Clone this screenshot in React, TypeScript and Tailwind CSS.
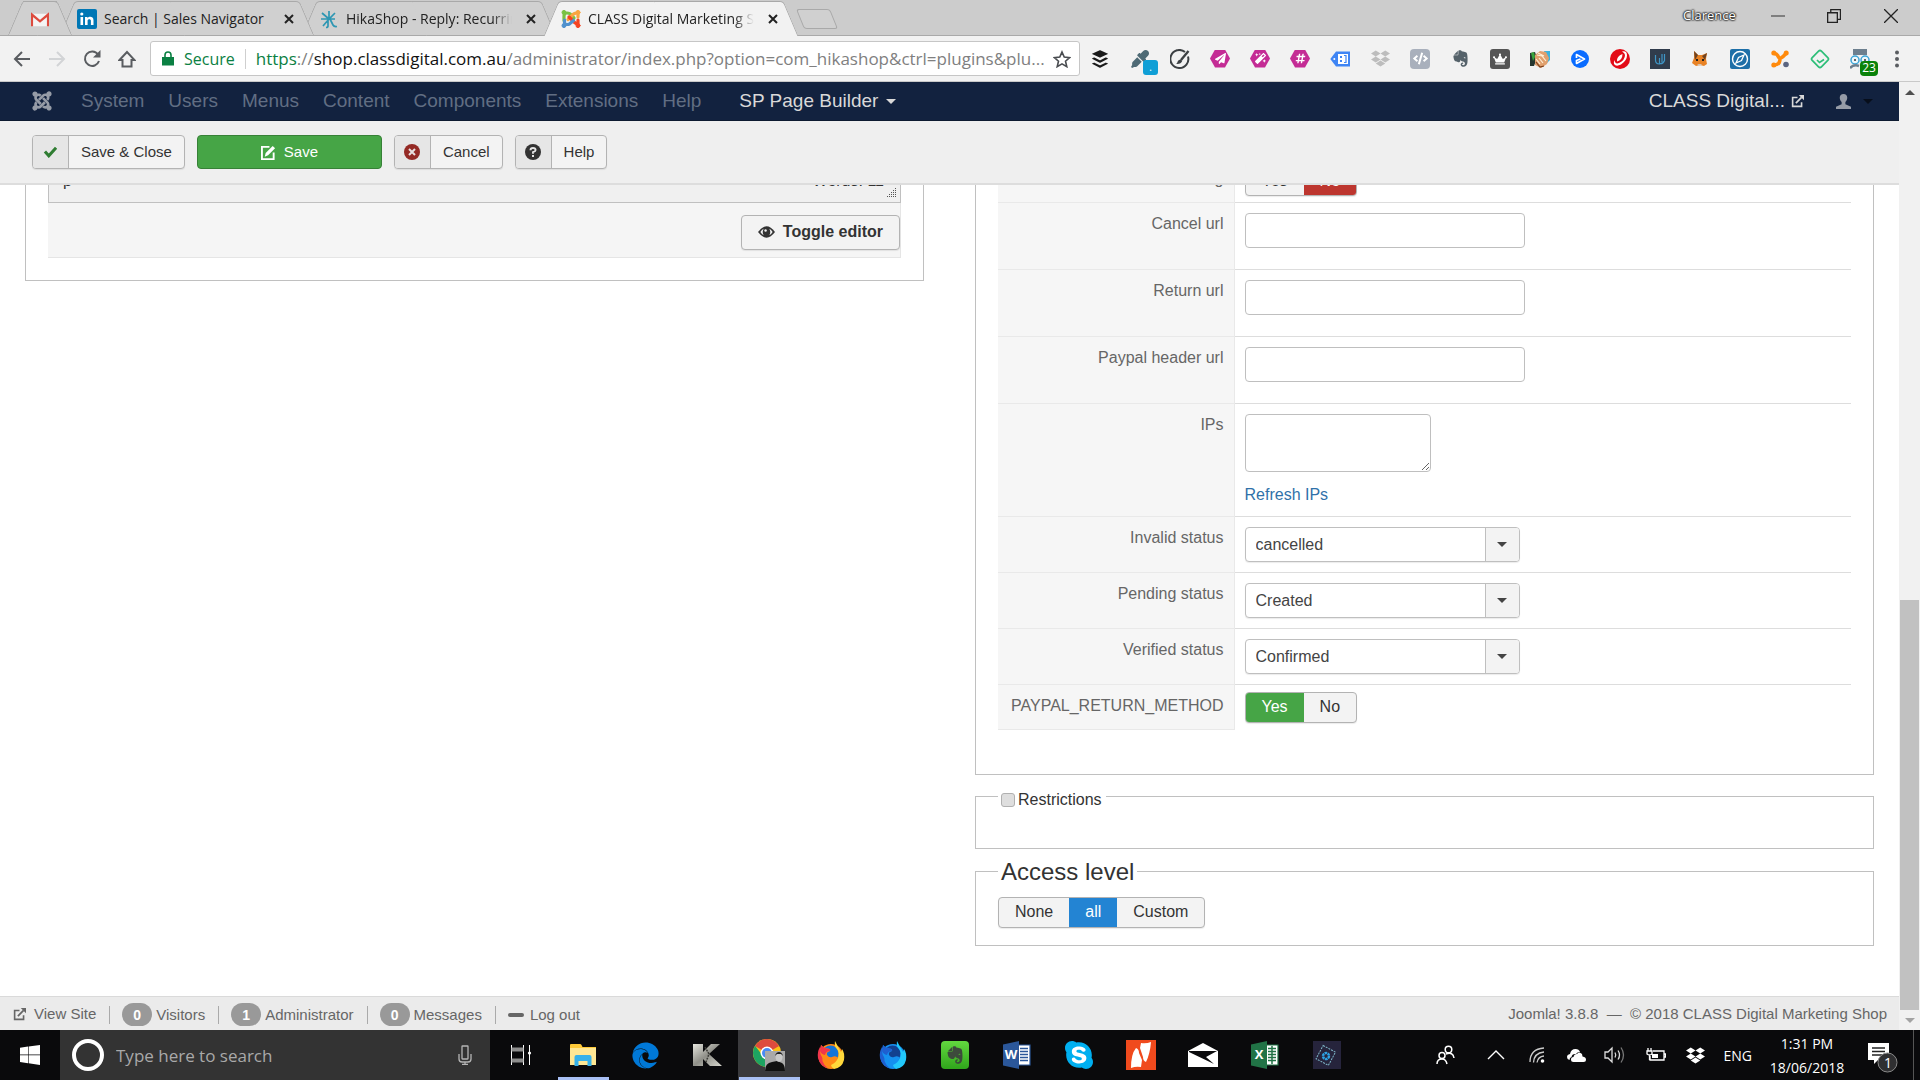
import type { ReactNode } from "react";
import {
  FaBuffer,
  FaCode,
  FaCrown,
  FaDropbox,
  FaEdge,
  FaEvernote,
  FaEyeDropper,
  FaHashtag,
  FaJoomla,
  FaMagic,
  FaPaperPlane,
  FaSkype
} from "react-icons/fa";

/* ---------- shared icons ---------- */

function ExternalIcon({ className }: { className: string }) {
  return (
    <svg viewBox="0 0 16 16" className={className} fill="none" stroke="currentColor" strokeWidth="2">
      <path d="M8 3H2v11h11V9" />
      <path d="M6 10l7-7" strokeWidth="2.2" />
      <path d="M9.5 0H16v6.5z" fill="currentColor" stroke="none" />
    </svg>
  );
}

function JoomlaColor({ className }: { className: string }) {
  return (
    <svg viewBox="0 0 20 20" className={className} fill="none" strokeWidth="3.2" strokeLinecap="round">
      <path d="M3 11.5V7q0-3 3-3t4 2l3 3" stroke="#7ac143" />
      <path d="M7 10.500l5-5q2-2 5-1V8" stroke="#f9a541" />
      <path d="M8 8l5 5q2 2 4 2v-4" stroke="#f44321" />
      <path d="M12.500 11.500L8.500 15q-2 1-5 0v-4" stroke="#5091cd" />
      <circle cx="3" cy="3.4" r="2" fill="#7ac143" stroke="#7ac143" strokeWidth="1" />
      <circle cx="17" cy="3.4" r="2" fill="#f9a541" stroke="#f9a541" strokeWidth="1" />
      <circle cx="17" cy="16.600" r="2" fill="#f44321" stroke="#f44321" strokeWidth="1" />
      <circle cx="3" cy="16.600" r="2" fill="#5091cd" stroke="#5091cd" strokeWidth="1" />
    </svg>
  );
}

function Caret({ className = "" }: { className?: string }) {
  return (
    <svg viewBox="0 0 10 5" className={`h-[5px] w-2.5 ${className}`} fill="currentColor">
      <path d="M0 0h10L5 5z" />
    </svg>
  );
}

/* ---------- browser chrome ---------- */

type Tab = { title: string; icon: ReactNode; active?: boolean; layer: string };

const tabs: Tab[] = [
  {
    title: "Search | Sales Navigator",
    layer: "z-20",
    icon: (
      <svg viewBox="0 0 20 20" className="h-5 w-5 shrink-0">
        <rect width="20" height="20" rx="2" fill="#0077b5" />
        <path d="M3.5 8h2.6v8H3.5zM8 8h2.5v1.2c1.600-2.200 6-1.800 6 2V16h-2.600v-4.300c0-2-3.300-2-3.300 0V16H8z" fill="#fff" />
        <circle cx="4.800" cy="5" r="1.600" fill="#fff" />
      </svg>
    )
  },
  {
    title: "HikaShop - Reply: Recurring",
    layer: "z-10",
    icon: (
      <svg viewBox="0 0 20 20" className="h-5 w-5 shrink-0" fill="none" stroke="#2f97b3" strokeWidth="1.700">
        <path d="M10 2v8M3 4l7 6 6-6M2 10h14M10 10l-6 7M9 10v7q0 1.500-2 1.500M11 10l3 6q1 2 4 1.500" />
      </svg>
    )
  },
  {
    title: "CLASS Digital Marketing Shop",
    layer: "z-30",
    active: true,
    icon: <JoomlaColor className="h-5 w-5 shrink-0" />
  }
];

function TabShape({ active }: { active?: boolean }) {
  const tone = active ? "bg-[#f2f2f2]" : "bg-[#d0d0d0]";
  return (
    <span className="absolute inset-x-2 top-0 -bottom-px flex" aria-hidden="true">
      <span className={`h-full flex-1 origin-center -skew-x-[23deg] rounded-tl-sm border-t border-l border-[#a9a9a9] ${tone} ${active ? "" : "border-b"}`} />
      <span className={`-ml-5 h-full flex-1 origin-center skew-x-[23deg] rounded-tr-sm border-t border-r border-[#a9a9a9] ${tone} ${active ? "" : "border-b"}`} />
    </span>
  );
}

function TabStrip() {
  return (
    <div className="flex h-9 justify-between border-b border-[#a9a9a9] bg-[#cccccc] pl-[7px]">
      <div className="flex pt-px">
        <div className="relative z-30 flex w-[66px] items-center justify-center pt-1">
          <TabShape />
          <svg viewBox="0 0 20 16" className="relative h-4 w-[18px]">
            <rect x="1" y="1" width="18" height="14" rx="1" fill="#f4f4f4" />
            <path d="M1 15V2l9 7.500L19 2v13" fill="none" stroke="#dd4b3e" strokeWidth="2.600" />
          </svg>
        </div>
        {tabs.map((tab) => (
          <div key={tab.title} className={`relative -ml-[14px] flex w-64 items-center pt-0.5 pr-[17px] pl-[18px] ${tab.layer}`}>
            <TabShape active={tab.active} />
            <span className="relative">{tab.icon}</span>
            <span
              className={`relative ml-[7px] flex-1 overflow-hidden text-sm whitespace-nowrap text-[#222] ${
                tab.title.startsWith("Search") ? "" : "[mask-image:linear-gradient(to_right,black_88%,transparent)]"
              }`}
            >
              {tab.title}
            </span>
            <button type="button" aria-label="Close tab" className="relative ml-2.5 p-1 text-[#222]">
              <svg viewBox="0 0 10 10" className="h-2.5 w-2.5" stroke="currentColor" strokeWidth="2">
                <path d="M1 1l8 8M9 1L1 9" />
              </svg>
            </button>
          </div>
        ))}
        <button type="button" aria-label="New tab" className="mt-2 ml-px h-5 w-[34px] skew-x-[22deg] rounded-[3px] border border-[#a9a9a9] bg-[#d0d0d0]" />
      </div>
      <div className="flex items-center text-[#222]">
        <span className="mr-0.5 mb-1 w-[54px] text-[13px] text-white [text-shadow:0_0_2px_#000,0_0_2px_#000,0_0_2px_#000]">Clarence</span>
        <button type="button" aria-label="Minimise" className="mb-1 ml-[11px] flex w-14 justify-center">
          <svg viewBox="0 0 13 13" className="h-3.5 w-3.5" stroke="#555" strokeWidth="1.200">
            <path d="M0 6.500h13" />
          </svg>
        </button>
        <button type="button" aria-label="Restore" className="mb-1 flex w-14 justify-center">
          <svg viewBox="0 0 13 13" className="h-3.5 w-3.5" fill="none" stroke="currentColor" strokeWidth="1.200">
            <path d="M.6 3.500h9v9h-9zM3.500 3V.6h9v9H10" />
          </svg>
        </button>
        <button type="button" aria-label="Close" className="mb-1 flex w-[58px] justify-center">
          <svg viewBox="0 0 13 13" className="h-3.5 w-3.5" stroke="currentColor" strokeWidth="1.200">
            <path d="M0 0l13 13M13 0L0 13" />
          </svg>
        </button>
      </div>
    </div>
  );
}

function Hexagon({ children }: { children: ReactNode }) {
  return (
    <span className="flex h-[18px] w-5 items-center justify-center bg-[#c42c95] text-[11px] text-white [clip-path:polygon(25%_0,75%_0,100%_50%,75%_100%,25%_100%,0_50%)]">
      {children}
    </span>
  );
}

const extensions: { name: string; icon: ReactNode }[] = [
  { name: "Buffer", icon: <FaBuffer className="h-5 w-5 text-[#1a1a1a]" /> },
  {
    name: "Colour picker",
    icon: (
      <span className="relative">
        <FaEyeDropper className="h-[18px] w-[18px] text-[#4e6a75]" />
        <span className="absolute top-2.5 left-3 flex h-[15px] w-[15px] items-center justify-center rounded-[3px] bg-[#109fd6] text-[10px] text-white">.</span>
      </span>
    )
  },
  {
    name: "Brush",
    icon: (
      <svg viewBox="0 0 20 20" className="h-5 w-5" fill="none" stroke="#3c4043" strokeWidth="2">
        <path d="M15 3a9 9 0 1 0 3 4.500" />
        <path d="M18.500 2l-7.500 9" strokeWidth="2.400" />
        <path d="M11 10.500q-3 0-3.500 2.500-.3 1.500-1.500 2 5 .5 6.200-3z" fill="#3c4043" stroke="none" />
      </svg>
    )
  },
  { name: "Send", icon: <Hexagon><FaPaperPlane /></Hexagon> },
  { name: "Magic", icon: <Hexagon><FaMagic /></Hexagon> },
  { name: "Hashtag", icon: <Hexagon><FaHashtag /></Hexagon> },
  {
    name: "Tag",
    icon: (
      <svg viewBox="0 0 20 16" className="h-4 w-5">
        <path d="M6 .5h14v15H6L.3 8z" fill="#3f85f4" />
        <circle cx="4.300" cy="8" r="1" fill="#fff" />
        <path d="M8 3h10v10H8z" fill="#fff" />
        <path d="M10 5h2v2h-2zM10 9h2v2h-2z" fill="#3f85f4" />
        <path d="M14 4.500h2v7h-2" fill="none" stroke="#3f85f4" strokeWidth="1.200" />
      </svg>
    )
  },
  { name: "Dropbox", icon: <FaDropbox className="h-[19px] w-[19px] text-[#bdbdbd]" /> },
  {
    name: "Code",
    icon: (
      <span className="flex h-5 w-5 items-center justify-center rounded-sm bg-[#a9b0bc] text-[15px] text-white">
        <FaCode />
      </span>
    )
  },
  { name: "Evernote", icon: <FaEvernote className="h-[19px] w-[19px] text-[#55626a]" /> },
  {
    name: "Crown",
    icon: (
      <span className="flex h-5 w-5 items-center justify-center rounded-[3px] bg-[#555] text-sm text-white">
        <FaCrown />
      </span>
    )
  },
  {
    name: "Handshake",
    icon: (
      <svg viewBox="0 0 20 18" className="h-[18px] w-5">
        <path d="M0 3l5-1 2 6-3 8H0z" fill="#26362f" />
        <path d="M1 3l3-1 1 5-2 4z" fill="#3aa53d" />
        <path d="M14 1l6 0v9l-3 3z" fill="#3cb3dd" />
        <path d="M5 5l5-4 6 1 3 6-2 6-6 4-6-3z" fill="#e0a06e" />
        <path d="M7 5l5 1 4 5M6 9l4 5M9 8l4 5M8 3l6 3" stroke="#fff0d8" strokeWidth="1.200" fill="none" />
        <path d="M6 12l4 5 4-1" stroke="#7b3f1c" strokeWidth="1.200" fill="none" />
      </svg>
    )
  },
  {
    name: "Play",
    icon: (
      <svg viewBox="0 0 18 18" className="h-[18px] w-[18px]">
        <circle cx="9" cy="9" r="9" fill="#0a6cff" />
        <path d="M5.500 8V4.600L13.500 9l-8 4.400V10.500L9.500 9" fill="none" stroke="#fff" strokeWidth="1.700" strokeLinejoin="round" />
      </svg>
    )
  },
  {
    name: "Trend",
    icon: (
      <svg viewBox="0 0 20 20" className="h-5 w-5">
        <circle cx="10" cy="10" r="10" fill="#e30b17" />
        <path d="M12 2.500q5-1 5 4 0 5-6 9-5 2.500-7-.5-.5-2 .5-4 .5 4.500 4.500 3 6-3 6-8 0-2-3-3.500z" fill="#fff" />
        <path d="M12.500 5q-6 2-5.500 7.500 5.500-1.500 5.500-7.500z" fill="#fff" />
      </svg>
    )
  },
  {
    name: "Udacity",
    icon: (
      <svg viewBox="0 0 20 20" className="h-5 w-5">
        <rect width="20" height="20" fill="#303c4c" />
        <path d="M5.500 6v5q0 4 4 4V9M9 14.500q4 1 5.500-3V5M12 5v8" fill="none" stroke="#3f95c5" strokeWidth="1.200" />
      </svg>
    )
  },
  {
    name: "Metamask",
    icon: (
      <svg viewBox="0 0 16 16" className="h-4 w-4">
        <path d="M2 0l4 4h4l5-2-1 6 1 5-3 2-4-1-4 1-4-3 2-5z" fill="#e88224" />
        <path d="M2 0l4 4-3 5zM15 2l-5 3 3 4z" fill="#6f4322" />
        <path d="M5 13h5l-2 2z" fill="#d9c3ae" />
        <path d="M4 8h2v2H4zM10 8h2v2h-2z" fill="#222" />
      </svg>
    )
  },
  {
    name: "Compass",
    icon: (
      <svg viewBox="0 0 20 20" className="h-5 w-5">
        <rect width="20" height="20" rx="2" fill="#1d6fa8" />
        <circle cx="10" cy="10" r="7.500" fill="none" stroke="#fff" strokeWidth="1.400" />
        <path d="M14 6l-2.500 5.500L6 14l2.500-5.500z" fill="none" stroke="#fff" strokeWidth="1.300" />
      </svg>
    )
  },
  {
    name: "Hub",
    icon: (
      <svg viewBox="0 0 18 18" className="h-[18px] w-[18px]" fill="none" stroke="#ff8a0c">
        <path d="M3 3.500q3 0 4.500 3.500t7.500-3.500M3 15q6 0 6-6" strokeWidth="3.500" />
        <circle cx="2.800" cy="3" r="2.500" fill="#ff8a0c" stroke="none" />
        <circle cx="15.200" cy="3" r="2.500" fill="#ff8a0c" stroke="none" />
        <circle cx="2.800" cy="15" r="2.500" fill="#ff8a0c" stroke="none" />
        <circle cx="15" cy="14.500" r="2.800" fill="#5b6580" stroke="none" />
      </svg>
    )
  },
  {
    name: "Check",
    icon: (
      <svg viewBox="0 0 20 20" className="h-5 w-5" fill="none" stroke="#2dbe78" strokeWidth="1.700">
        <rect x="3.500" y="3.500" width="13" height="13" rx="2" transform="rotate(45 10 10)" />
        <path d="M7 11l2.500 2.500L14 10.500" />
      </svg>
    )
  },
  {
    name: "Reader",
    icon: (
      <span className="relative">
        <svg viewBox="0 0 20 20" className="h-5 w-5" fill="none">
          <path d="M3 0h14v6H3z" fill="#6d7f8e" />
          <circle cx="5" cy="11" r="4" stroke="#3ba5d8" strokeWidth="1.500" fill="#eef7fb" />
          <circle cx="15" cy="11" r="4" stroke="#3ba5d8" strokeWidth="1.500" fill="#eef7fb" />
          <circle cx="5" cy="11" r="1" fill="#333" />
          <circle cx="15" cy="11" r="1" fill="#333" />
          <path d="M0 19q4-4 9-2" stroke="#6d7f8e" strokeWidth="2.500" />
        </svg>
        <span className="absolute top-3 left-2.5 flex h-[15px] w-[18px] items-center justify-center rounded-sm bg-[#0a820a] text-xs text-white">23</span>
      </span>
    )
  }
];

function AddressBar() {
  return (
    <div className="flex h-[46px] items-center border-b border-[#c9c9c9] bg-[#f2f2f2] pl-1 text-[#5a5d61]">
      <button type="button" aria-label="Back" className="flex w-[35px] justify-center">
        <svg viewBox="0 0 18 16" className="h-4 w-[18px]" fill="none" stroke="currentColor" strokeWidth="2">
          <path d="M17 8H2M9 1L2 8l7 7" />
        </svg>
      </button>
      <button type="button" aria-label="Forward" className="flex w-[35px] justify-center text-[#d2d4d6]">
        <svg viewBox="0 0 18 16" className="h-4 w-[18px]" fill="none" stroke="currentColor" strokeWidth="2">
          <path d="M1 8h15M9 1l7 7-7 7" />
        </svg>
      </button>
      <button type="button" aria-label="Reload" className="flex w-[35px] justify-center">
        <svg viewBox="0 0 18 18" className="h-[18px] w-[18px]" fill="none" stroke="currentColor" strokeWidth="2">
          <path d="M15 4.500A7.200 7.200 0 1 0 16 11" />
          <path d="M17.500 0v7.500H10z" fill="currentColor" stroke="none" />
        </svg>
      </button>
      <button type="button" aria-label="Home" className="flex w-[35px] justify-center">
        <svg viewBox="0 0 18 18" className="h-[18px] w-[18px]" fill="none" stroke="currentColor" strokeWidth="2">
          <path d="M1.500 10L9 2l7.500 8h-3v6.500h-9V10z" />
        </svg>
      </button>
      <div className="ml-1.5 flex h-[35px] flex-1 items-center overflow-hidden rounded-[3px] border border-[#c6c6c6] bg-white pr-2 pl-[11px] text-base whitespace-nowrap">
        <svg viewBox="0 0 12 15" className="h-[15px] w-3" fill="#0b8043">
          <path d="M0 6h12v8.500H0z" />
          <path d="M3 6V4a3 3 0 0 1 6 0v2" fill="none" stroke="#0b8043" strokeWidth="1.600" />
        </svg>
        <span className="ml-2.5 text-[#0b8043]">Secure</span>
        <span className="mx-2.5 h-5 w-px bg-[#cfcfcf]" />
        <span className="flex-1 overflow-hidden text-[17px] text-[#808080]">
          <span className="text-[#0b8043]">https</span>://<span className="text-[#111]">shop.classdigital.com.au</span>
          /administrator/index.php?option=com_hikashop&amp;ctrl=plugins&amp;plu...
        </span>
        <button type="button" aria-label="Bookmark">
          <svg viewBox="0 0 20 19" className="h-[18px] w-[18px]" fill="none" stroke="#4a4d51" strokeWidth="1.800">
            <path d="M10 1.800l2.500 5.600 6 .6-4.600 4 1.400 6L10 14.900 4.700 18l1.400-6L1.500 8l6-.6z" />
          </svg>
        </button>
      </div>
      <div className="flex">
        {extensions.map((ext) => (
          <button key={ext.name} type="button" aria-label={ext.name} className="flex h-6 w-10 items-center justify-center">
            {ext.icon}
          </button>
        ))}
      </div>
      <button type="button" aria-label="Menu" className="flex w-10 pl-[15px]">
        <svg viewBox="0 0 4 18" className="h-[18px] w-1" fill="currentColor">
          <circle cx="2" cy="2.500" r="2" />
          <circle cx="2" cy="9" r="2" />
          <circle cx="2" cy="15.500" r="2" />
        </svg>
      </button>
    </div>
  );
}

/* ---------- Joomla admin ---------- */

const menu = ["System", "Users", "Menus", "Content", "Components", "Extensions", "Help"];

function AdminNav() {
  return (
    <nav className="flex h-[39px] shrink-0 items-center justify-between border-b border-[#0d1a30] bg-[#12223f] pr-[26px] pl-[31px] text-[19px] text-[#616e83]">
      <div className="flex items-center">
        <FaJoomla className="h-[22px] w-[22px] text-[#969ca7]" />
        <ul className="ml-7 flex gap-6">
          {menu.map((item) => (
            <li key={item}>
              <a href="#">{item}</a>
            </li>
          ))}
        </ul>
        <a href="#" className="ml-[38px] flex items-center gap-2 text-[#d9d9d9]">
          SP Page Builder <Caret />
        </a>
      </div>
      <div className="flex items-center">
        <a href="#" className="flex items-center gap-1.5 text-[#d9d9d9]">
          CLASS Digital... <ExternalIcon className="h-[13px] w-[13px]" />
        </a>
        <a href="#" aria-label="User menu" className="ml-8 flex items-center">
          <svg viewBox="0 0 16 16" className="h-[15px] w-[15px] text-[#969ca7]" fill="currentColor">
            <path d="M8 0c2.500 0 4 1.500 4 4 0 2-1 3.500-2 4.500V11l6 2.500V16H0v-2.500L6 11V8.500C5 7.500 4 6 4 4c0-2.500 1.500-4 4-4z" />
          </svg>
          <Caret className="ml-3 text-[#070e1b]" />
        </a>
      </div>
    </nav>
  );
}

function ToolbarButton({ label, icon }: { label: string; icon: ReactNode }) {
  return (
    <button type="button" className="flex h-[34px] items-stretch overflow-hidden rounded-[4px] border border-[#b3b3b3] bg-[#f3f3f3] text-[15px] text-[#333] shadow-[0_1px_1px_rgba(0,0,0,0.08)]">
      <span className="flex w-9 items-center justify-center border-r border-[#b3b3b3] bg-[#e6e6e6]">{icon}</span>
      <span className="flex items-center px-3 pt-px">{label}</span>
    </button>
  );
}

function Toolbar() {
  return (
    <div className="flex h-16 shrink-0 items-center gap-3 border-b-2 border-[#dddddd] bg-[#efefef] px-8">
      <ToolbarButton
        label="Save & Close"
        icon={
          <svg viewBox="0 0 16 14" className="h-3 w-[15px]" fill="none" stroke="#2f7d32" strokeWidth="3.500">
            <path d="M1.500 6.500l4.500 5 8.500-9.500" />
          </svg>
        }
      />
      <button type="button" className="flex h-[34px] w-[185px] items-center justify-center gap-2 rounded-[4px] border border-[#378137] bg-[#46a546] pt-px text-[15px] text-white">
        <svg viewBox="0 0 16 16" className="h-[15px] w-[15px]" fill="none" stroke="currentColor" strokeWidth="2">
          <path d="M9 2H1v13h12.500V8" />
          <path d="M4 12.500l1-4L12.500 1l2.500 2.500L7.500 11z" fill="currentColor" stroke="none" />
        </svg>
        Save
      </button>
      <ToolbarButton
        label="Cancel"
        icon={
          <svg viewBox="0 0 16 16" className="h-4 w-4">
            <circle cx="8" cy="8" r="8" fill="#942a25" />
            <path d="M5 5l6 6M11 5l-6 6" stroke="#e8e0e0" strokeWidth="2" />
          </svg>
        }
      />
      <ToolbarButton
        label="Help"
        icon={
          <svg viewBox="0 0 16 16" className="h-4 w-4">
            <circle cx="8" cy="8" r="8" fill="#333" />
            <path d="M5.500 6.300Q5.500 4 8 4t2.600 2Q10.600 7.300 8 8.200v1.500" fill="none" stroke="#e6e6e6" strokeWidth="1.900" />
            <path d="M7 11h2v2H7z" fill="#e6e6e6" />
          </svg>
        }
      />
    </div>
  );
}

function EditorPanel() {
  return (
    <fieldset className="h-[123px] min-w-0 border border-t-0 border-[#c0c0c0] px-[22px]">
      <div className="flex h-[45px] items-center border border-[#c0c0c0] bg-[#f0f0f0] pl-3.5 text-base text-[#333]">
        <span>p</span>
        <span className="ml-auto">Words: 11</span>
        <svg viewBox="0 0 12 10" className="mr-1 mb-1 h-2.5 w-3 self-end" stroke="#555" strokeDasharray="1 1">
          <path d="M11.500 0v10M9.500 2v8M7.500 4v6M5.500 6v4M3.500 8v2" />
        </svg>
      </div>
      <div className="flex h-[55px] items-center justify-end border-r border-b border-[#e5e5e5] bg-[#f5f5f5] pt-1">
        <button type="button" className="flex h-[35px] items-center gap-2 rounded-[4px] border border-[#b3b3b3] bg-[#f3f3f3] px-4 text-base font-bold text-[#333] shadow-[0_1px_1px_rgba(0,0,0,0.08)]">
          <svg viewBox="0 0 18 12" className="h-3 w-[17px]">
            <path d="M0 6q9-12 18 0-9 12-18 0z" fill="#333" />
            <path d="M2.500 6Q4 3.500 6 2.500 4 6 6 9.500 4 8.500 2.500 6zM15.500 6Q14 3.500 12 2.500q2 3.500 0 7Q14 8.500 15.500 6z" fill="#f3f3f3" />
            <circle cx="8" cy="4.500" r="1.300" fill="#f3f3f3" />
          </svg>
          Toggle editor
        </button>
      </div>
    </fieldset>
  );
}

function Toggle({ options, active, tone }: { options: string[]; active: string; tone: string }) {
  return (
    <div className="flex h-[31px] w-fit overflow-hidden rounded-[4px] border border-[#b3b3b3] bg-[#f3f3f3] text-base text-[#333] shadow-[0_1px_1px_rgba(0,0,0,0.08)]">
      {options.map((option) => (
        <button key={option} type="button" aria-pressed={option === active} className={`px-4 ${option === active ? tone : ""}`}>
          {option}
        </button>
      ))}
    </div>
  );
}

function Row({ label, id, height, children }: { label: string; id?: string; height: string; children: ReactNode }) {
  return (
    <tr className={`${height} border-b border-[#dddddd] align-top last:border-b-0`}>
      <th scope="row" className="border-r border-b border-[#e9e9e9] bg-[#f6f6f6] pt-2.5 pr-2.5 text-right font-normal text-[#666]">
        <label htmlFor={id}>{label}</label>
      </th>
      <td className="pl-2.5">{children}</td>
    </tr>
  );
}

function StatusSelect({ id, value }: { id: string; value: string }) {
  return (
    <div className="relative mt-2.5 h-[35px] w-[275px]">
      <select id={id} defaultValue={value} className="h-full w-full appearance-none rounded-[4px] border border-[#bfbfbf] bg-white px-2.5 pt-0.5 text-base text-[#444] shadow-[0_1px_1px_rgba(0,0,0,0.08)]">
        <option>cancelled</option>
        <option>Created</option>
        <option>Confirmed</option>
      </select>
      <span className="pointer-events-none absolute inset-y-px right-px flex w-[34px] items-center justify-center rounded-r-[3px] border-l border-[#bfbfbf] bg-[#f3f3f3] text-[#444]">
        <Caret />
      </span>
    </div>
  );
}

const urlFields = [
  { id: "cancel-url", label: "Cancel url" },
  { id: "return-url", label: "Return url" },
  { id: "header-url", label: "Paypal header url" }
];

const statusFields = [
  { id: "invalid-status", label: "Invalid status", value: "cancelled" },
  { id: "pending-status", label: "Pending status", value: "Created" },
  { id: "verified-status", label: "Verified status", value: "Confirmed" }
];

function PaymentPanel() {
  return (
    <fieldset className="min-w-0 border border-t-0 border-[#c0c0c0] px-[22px] pb-11">
      <table className="w-full border-collapse text-base leading-[22px]">
        <colgroup>
          <col className="w-[236px]" />
          <col />
        </colgroup>
        <tbody>
          <Row label="Debug" height="h-11">
            <div className="pt-[7px]">
              <Toggle options={["Yes", "No"]} active="No" tone="bg-[#bd362f] text-white" />
            </div>
          </Row>
          {urlFields.map((field) => (
            <Row key={field.id} id={field.id} label={field.label} height="h-[67px]">
              <input id={field.id} type="text" className="mt-2.5 h-[35px] w-[280px] rounded-[4px] border border-[#bfbfbf] bg-white px-2" />
            </Row>
          ))}
          <Row id="ips" label="IPs" height="h-[113px]">
            <textarea id="ips" className="mt-2.5 block h-[58px] w-[186px] rounded-[4px] border border-[#bfbfbf] bg-white" />
            <a href="#" className="mt-3 block text-[#3071a9]">
              Refresh IPs
            </a>
          </Row>
          {statusFields.map((field) => (
            <Row key={field.id} id={field.id} label={field.label} height="h-14">
              <StatusSelect id={field.id} value={field.value} />
            </Row>
          ))}
          <Row label="PAYPAL_RETURN_METHOD" height="h-[45px]">
            <div className="pt-[7px]">
              <Toggle options={["Yes", "No"]} active="Yes" tone="bg-[#46a546] text-white" />
            </div>
          </Row>
        </tbody>
      </table>
    </fieldset>
  );
}

function AccessPanels() {
  return (
    <>
      <fieldset className="mt-[7px] h-[67px] min-w-0 border border-[#c0c0c0] px-[22px]">
        <legend className="px-[3px] pt-1.5 text-base">
          <label className="flex items-center gap-[3px] pr-px leading-6">
            <input type="checkbox" className="h-3.5 w-3.5 appearance-none rounded-[3px] border border-[#b0b0b0] bg-[#dedede]" />
            Restrictions
          </label>
        </legend>
      </fieldset>
      <fieldset className="mt-[7px] min-w-0 border border-[#c0c0c0] px-[22px] pb-[17px]">
        <legend className="px-[3px] text-2xl text-[#333]">Access level</legend>
        <div className="pt-[9px]">
          <Toggle options={["None", "all", "Custom"]} active="all" tone="bg-[#2384d3] text-white" />
        </div>
      </fieldset>
    </>
  );
}

const counters = [
  { count: 0, label: "Visitors" },
  { count: 1, label: "Administrator" },
  { count: 0, label: "Messages" }
];

function StatusBar() {
  return (
    <footer className="flex h-[34px] shrink-0 items-center justify-between border-t border-[#dadada] bg-[#ebebeb] pt-0.5 pr-3 pl-[13px] text-[15px] text-[#666]">
      <div className="flex items-center">
        <a href="#" className="flex items-center gap-2">
          <ExternalIcon className="h-[13px] w-[13px]" />
          View Site
        </a>
        {counters.map((item) => (
          <span key={item.label} className="ml-[13px] flex items-center gap-1 border-l border-[#aaa] pl-3 leading-[18px]">
            <span className="-my-1 flex h-[23px] w-[30px] items-center justify-center rounded-full bg-[#999] text-sm font-bold text-white">{item.count}</span>
            {item.label}
          </span>
        ))}
        <a href="#" className="ml-[13px] flex items-center gap-1.5 border-l border-[#aaa] pl-3 leading-[18px]">
          <span className="h-1 w-4 rounded-sm bg-[#666]" />
          Log out
        </a>
      </div>
      <p>
        Joomla! 3.8.8 &nbsp;—&nbsp; © 2018 CLASS Digital Marketing Shop
      </p>
    </footer>
  );
}

function Scrollbar() {
  return (
    <div className="flex w-[21px] shrink-0 flex-col items-center bg-[#f1f1f1] text-[#505050]" aria-hidden="true">
      <span className="flex h-5 items-center">
        <Caret className="rotate-180" />
      </span>
      <span className="flex-[498]" />
      <span className="w-[19px] flex-[410] bg-[#c1c1c1]" />
      <span className="flex h-5 items-center text-[#a3a3a3]">
        <Caret />
      </span>
    </div>
  );
}

/* ---------- Windows taskbar ---------- */

function OfficeIcon({ letter, color }: { letter: string; color: string }) {
  return (
    <span className="relative flex h-7 w-7 items-center">
      <svg viewBox="0 0 28 28" className="h-7 w-7">
        <path d="M15 4h12v20H15z" fill="#fff" stroke={color} strokeWidth="1.200" />
        <path d="M17 7.500h8M17 10.500h8M17 13.500h8M17 16.500h8M17 19.500h8" stroke={color} strokeWidth="1.300" />
        {letter === "X" ? <path d="M21 5v18" stroke={color} strokeWidth="1.500" /> : null}
        <path d="M0 3.500L16 0v28L0 24.500z" fill={color} />
      </svg>
      <span className="absolute inset-y-0 left-0 flex w-4 items-center justify-center text-[13px] font-bold text-white">{letter}</span>
    </span>
  );
}

function FirefoxIcon({ outer, inner, tip, core }: { outer: string; inner: string; tip: string; core: string }) {
  return (
    <svg viewBox="0 0 28 28" className="h-7 w-7">
      <circle cx="14" cy="15.500" r="12.500" fill={inner} />
      <path d="M3 6Q0 11 1 17q2 8 10 10.500Q2 20 7 12L5 9z" fill={outer} />
      <circle cx="13.500" cy="12.500" r="8" fill={core} />
      <path d="M18 0q-1 5 2 8 3 4 1 9-2 5-7 7 0 2 3 4 8-1 10-9 1-7-2-11 0 2-1 3-3-5-6-11z" fill={tip} />
      <path d="M4 4q2 3 6 3.500 4 0 3 2.500-4 1-3 4 2 3 5 2 4-2 6 1-4 6-10 4-7-3-8-10z" fill={inner} />
      <path d="M4 4q2 3 6 3.500 4 0 3 2.500-4 0-5 4-4-1-5-4z" fill={outer} />
    </svg>
  );
}

const apps: { name: string; icon: ReactNode; state?: string; bar?: string }[] = [
  {
    name: "Task view",
    icon: (
      <svg viewBox="0 0 22 22" className="h-[22px] w-[22px]" stroke="#fff" fill="none">
        <path d="M1.500 1v20M13.500 1v20M19.500 1v20" />
        <path d="M1.500 5.500h12M1.500 16.500h12" stroke="#8c8c8c" strokeWidth="4" />
        <circle cx="19.500" cy="9" r="1.600" fill="#fff" stroke="none" />
      </svg>
    )
  },
  {
    name: "File Explorer",
    bar: "w-[51px]",
    icon: (
      <svg viewBox="0 0 26 22" className="h-[22px] w-[26px]">
        <path d="M0 1q0-1 1-1h9q1 0 1.500 1l1 2H26v18H0z" fill="#ffca38" />
        <path d="M0 4h26v17H0z" fill="#ffe794" />
        <path d="M4.500 22V13q0-2 2-2h13q2 0 2 2v9h-4v-5h-9v5z" fill="#36b1ea" />
      </svg>
    )
  },
  { name: "Edge", icon: <FaEdge className="h-[27px] w-[27px] text-[#0078d7]" /> },
  {
    name: "K",
    icon: (
      <svg viewBox="0 0 30 24" className="h-6 w-[30px]">
        <defs>
          <linearGradient id="steel" x1="0" y1="0" x2="1" y2="1">
            <stop offset="0" stopColor="#e6e6df" />
            <stop offset="0.500" stopColor="#8f8f88" />
            <stop offset="1" stopColor="#d8d8d0" />
          </linearGradient>
        </defs>
        <path d="M1 1h10v8l8-8h9l-11 10 13 12H18l-7-7v7H1z" fill="url(#steel)" />
        <path d="M13 4l4 7-3 8" stroke="#3b3b36" strokeWidth="1.500" fill="none" strokeDasharray="2 1" />
      </svg>
    )
  },
  {
    name: "Chrome",
    state: "bg-[#3a3a3d]",
    bar: "w-[61px]",
    icon: (
      <svg viewBox="0 0 34 32" className="h-8 w-[34px]">
        <circle cx="15" cy="14" r="14" fill="#fbc116" />
        <path d="M15 14L2.900 7A14 14 0 0 1 27.100 7z" fill="#dd4b3e" />
        <path d="M3 6.800a14 14 0 0 0 10.500 21.100L19 18l-8-1z" fill="#1da462" />
        <circle cx="15" cy="14" r="6.500" fill="#fff" />
        <circle cx="15" cy="14" r="5" fill="#4a8af4" />
        <path d="M13 12h20v20H13z" fill="#a9a9a9" />
        <path d="M13 32q0-8 7-9l5-1 5 2q3 2 3 8z" fill="#111" />
        <ellipse cx="27" cy="18" rx="3.500" ry="4.800" fill="#c9c9c9" />
        <path d="M23 17q1-4 4-4t4 4l-2-2h-4z" fill="#222" />
      </svg>
    )
  },
  { name: "Firefox", icon: <FirefoxIcon outer="#f2364b" inner="#ff8a16" tip="#ffd83b" core="#1475d8" /> },
  { name: "Firefox Developer", icon: <FirefoxIcon outer="#1e5fd0" inner="#1590f0" tip="#22c8fb" core="#12408f" /> },
  {
    name: "Evernote",
    icon: (
      <span className="flex h-7 w-7 items-center justify-center rounded-sm bg-gradient-to-b from-[#62d83f] to-[#2fa51b] text-[#3d4a3c]">
        <FaEvernote className="h-5 w-5" />
      </span>
    )
  },
  { name: "Word", icon: <OfficeIcon letter="W" color="#2b579a" /> },
  {
    name: "Skype",
    icon: (
      <span className="relative flex h-7 w-7 items-center justify-center">
        <span className="absolute h-5 w-5 rounded-full bg-white" />
        <FaSkype className="relative h-8 w-8 shrink-0 text-[#00aff0]" />
      </span>
    )
  },
  {
    name: "Nitro",
    icon: (
      <svg viewBox="0 0 30 30" className="h-[30px] w-[30px]">
        <path d="M0 0h30v30H0z" fill="#f04a1d" />
        <path d="M15 3q5 1 10-1-1 12-5 20-3-1-3-5l-3-9zM15 27q-5-1-10 1 0-14 5-20 3 1 3 5l3 7z" fill="#fff" />
      </svg>
    )
  },
  {
    name: "Mail",
    icon: (
      <svg viewBox="0 0 30 24" className="h-6 w-[30px]">
        <path d="M0 8L15 0l15 8v16H0z" fill="#fff" />
        <path d="M1 8h28l-11 6 8 7L1 9z" fill="#0a0a0c" />
      </svg>
    )
  },
  { name: "Excel", icon: <OfficeIcon letter="X" color="#217346" /> },
  {
    name: "Photos",
    icon: (
      <svg viewBox="0 0 28 28" className="h-7 w-7">
        <path d="M0 0h28v28H0z" fill="#26243c" />
        <rect x="6" y="7" width="14" height="15" fill="none" stroke="#7fb7c9" strokeDasharray="2 1" transform="rotate(28 13 14)" />
        <circle cx="13" cy="15" r="3" fill="none" stroke="#2ea3e6" strokeWidth="2.500" strokeDasharray="2.500 .6" />
      </svg>
    )
  }
];

const tray: { name: string; width: string; icon: ReactNode }[] = [
  {
    name: "People",
    width: "w-[46px]",
    icon: (
      <svg viewBox="0 0 20 20" className="h-5 w-5" fill="none" stroke="#fff" strokeWidth="1.500">
        <circle cx="13.500" cy="4.500" r="3.300" />
        <circle cx="7" cy="10.500" r="3" />
        <path d="M2 19q0-5 5-5 4 0 5 5M11 9q7-2.500 8 4" />
      </svg>
    )
  },
  {
    name: "Show hidden icons",
    width: "w-14",
    icon: (
      <svg viewBox="0 0 18 10" className="h-2.5 w-[18px]" fill="none" stroke="#fff" strokeWidth="1.400">
        <path d="M1 9l8-8 8 8" />
      </svg>
    )
  },
  {
    name: "Wi-Fi",
    width: "w-[26px]",
    icon: (
      <svg viewBox="0 0 16 16" className="h-4 w-4" fill="none" stroke="#ccc" strokeWidth="1.300">
        <path d="M1 15Q1 2 15 1M4.500 15.500Q5 6 15 5M8 15.500Q9 9.500 15 9" />
        <circle cx="13.500" cy="14" r="1.800" fill="#fff" stroke="none" />
      </svg>
    )
  },
  {
    name: "OneDrive",
    width: "w-[52px]",
    icon: (
      <svg viewBox="0 0 20 13" className="h-[13px] w-5" fill="#fff">
        <path d="M1 8q0-2.500 3-3 1-5 5.500-5Q13 0 14 3q-3 0-4 2-4-.5-4.500 3-2 .5-2 3-2.500-.5-2.500-3z" />
        <path d="M5 10.500Q5 8 7.500 8q.5-3 3.500-3 2-3 5 0l.5 2.500Q20 8 20 10.500T17.500 13h-10Q5 13 5 10.500z" />
      </svg>
    )
  },
  {
    name: "Volume",
    width: "w-[26px]",
    icon: (
      <svg viewBox="0 0 21 18" className="h-[18px] w-[21px]" fill="none" stroke="#ddd" strokeWidth="1.300">
        <path d="M1 6h3l4-4v14l-4-4H1z" />
        <path d="M11 6.500q1.500 2.500 0 5M14 4.500q3 4.500 0 9" />
        <path d="M17 1.500q5 7.500 0 15" stroke="#777" />
      </svg>
    )
  },
  {
    name: "Battery",
    width: "w-14",
    icon: (
      <svg viewBox="0 0 20 14" className="h-3.5 w-5" fill="none" stroke="#fff" strokeWidth="1.300">
        <path d="M7 3h11v9H4V8M18.500 6h1v3h-1" />
        <path d="M6 6h6v4H6z" fill="#fff" stroke="none" />
        <path d="M1 3h5v3q-2.500 2-5 0zM2 3V0M5 3V0M3.500 7v5" />
      </svg>
    )
  },
  { name: "Dropbox", width: "w-[23px]", icon: <FaDropbox className="h-[19px] w-[19px] text-white" /> }
];

function Taskbar() {
  return (
    <div className="flex h-[50px] shrink-0 items-stretch bg-[#0a0a0c] text-white">
      <button type="button" aria-label="Start" className="flex w-[60px] items-center justify-center">
        <svg viewBox="0 0 20 20" className="h-5 w-5" fill="#fff">
          <path d="M0 2.800L8 1.600v8H0zM8.600 1.500L20 0v9.600H8.600zM0 10.200h8v8L0 17zM8.600 10.200H20V20L8.600 18.300z" />
        </svg>
      </button>
      <div className="flex w-[430px] items-center bg-[#333333] pr-[18px] pl-3">
        <span className="h-8 w-8 rounded-full border-4 border-white" />
        <input type="text" aria-label="Search" placeholder="Type here to search" className="ml-3 min-w-0 flex-1 bg-transparent pt-0.5 text-[17px] placeholder:text-[#a9a9a9]" />
        <svg viewBox="0 0 14 20" className="h-5 w-3.5" fill="none" stroke="#b5b5b5" strokeWidth="1.300">
          <rect x="4" y="1" width="6" height="13" rx=".5" />
          <path d="M1 9v5q0 3 3 3h6q3 0 3-3V9M7 17v2.500M4 19.500h6" />
        </svg>
      </div>
      {apps.map((app) => (
        <button key={app.name} type="button" aria-label={app.name} className={`relative flex w-[62px] items-center justify-center ${app.state ?? ""}`}>
          {app.icon}
          {app.bar ? <span className={`absolute bottom-0 h-[3px] bg-[#a9c0f5] ${app.bar}`} /> : null}
        </button>
      ))}
      <div className="ml-auto flex items-center">
        {tray.map((item) => (
          <button key={item.name} type="button" aria-label={item.name} className={`flex items-center justify-center ${item.width}`}>
            {item.icon}
          </button>
        ))}
        <span className="ml-[17px] pt-0.5 text-sm">ENG</span>
        <span className="ml-4 w-[78px] pt-0.5 text-center text-sm leading-6 whitespace-nowrap">
          1:31 PM
          <br />
          18/06/2018
        </span>
        <button type="button" aria-label="Notifications" className="relative mt-1 ml-5 flex w-8 items-center">
          <svg viewBox="0 0 32 32" className="h-8 w-8">
            <path d="M2 2h21v17H12l-4 4v-4H2z" fill="#fff" />
            <path d="M6 7h13M6 10.500h13M6 14h13" stroke="#222" strokeWidth="1.300" />
            <circle cx="21.500" cy="21.500" r="9.500" fill="#2f2f31" stroke="#8a8a8a" />
          </svg>
          <span className="absolute right-1.5 bottom-0 text-sm">1</span>
        </button>
        <span className="ml-[15px] h-[50px] w-[7px] border-l border-[#555]" />
      </div>
    </div>
  );
}

export default function App() {
  return (
    <div className="flex h-screen flex-col overflow-hidden bg-white font-['Open_Sans',sans-serif]">
      <TabStrip />
      <AddressBar />
      <div className="flex min-h-0 flex-1 font-['Liberation_Sans',Arial,sans-serif] text-[#333]">
        <div className="flex min-w-0 flex-1 flex-col">
          <AdminNav />
          <Toolbar />
          <main className="min-h-0 flex-1 overflow-hidden">
            {/* panels sit slightly above the fold, as if scrolled */}
            <div className="-mt-[27px] grid grid-cols-2 gap-[51px] px-[25px]">
              <EditorPanel />
              <div>
                <PaymentPanel />
                <AccessPanels />
              </div>
            </div>
          </main>
          <StatusBar />
        </div>
        <Scrollbar />
      </div>
      <Taskbar />
    </div>
  );
}
